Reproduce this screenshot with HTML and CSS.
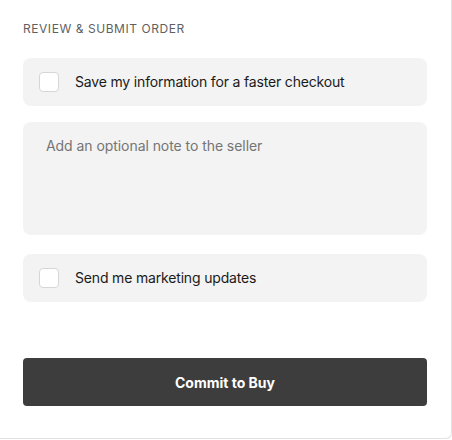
FILE: index.html
```html
<!DOCTYPE html>
<html lang="en">
<head>
<meta charset="utf-8">
<title>Review &amp; Submit Order</title>
<link rel="stylesheet" href="styles.css">
</head>
<body>
<section class="card">
  <h2 class="heading">REVIEW &amp; SUBMIT ORDER</h2>
  <label class="option">
    <span class="check"></span>
    <span class="option-text">Save my information for a faster checkout</span>
  </label>
  <div class="note">Add an optional note to the seller</div>
  <label class="option">
    <span class="check"></span>
    <span class="option-text">Send me marketing updates</span>
  </label>
  <button class="submit" type="button">Commit to Buy</button>
</section>
</body>
</html>
```
FILE: styles.css
```css
html, body {
  margin: 0;
  padding: 0;
  background: #ffffff;
}
body {
  font-family: Inter, "Noto Sans", "Liberation Sans", sans-serif;
  color: #1a1a1a;
}
.card {
  box-sizing: border-box;
  width: 452px;
  height: 439px;
  padding: 21px 24px 0 23px;
  border-right: 1px solid #e2e2e2;
  border-bottom: 1px solid #e2e2e2;
  border-bottom-right-radius: 6px;
  display: flex;
  flex-direction: column;
  background: #fff;
}
.heading {
  margin: 0;
  font-size: 12px;
  line-height: 16px;
  font-weight: 400;
  letter-spacing: 0.55px;
  color: #5f5f5f;
}
.option {
  display: flex;
  align-items: center;
  gap: 16px;
  height: 48px;
  padding: 0 16px;
  background: #f3f3f3;
  border-radius: 8px;
}
.heading + .option {
  margin-top: 21px;
}
.check {
  box-sizing: border-box;
  width: 20px;
  height: 20px;
  background: #fff;
  border: 1px solid #d6d6d6;
  border-radius: 4px;
  flex: none;
}
.option-text {
  font-size: 14px;
  line-height: 20px;
  letter-spacing: -0.17px;
  color: #1a1a1a;
}
.note {
  box-sizing: border-box;
  margin-top: 16px;
  height: 113px;
  padding: 14px 23px;
  background: #f3f3f3;
  border-radius: 8px;
  font-size: 14px;
  line-height: 20px;
  letter-spacing: -0.06px;
  color: #757575;
}
.note + .option {
  margin-top: 19px;
}
.submit {
  margin-top: 56px;
  height: 48px;
  border: 0;
  border-radius: 4px;
  background: #3d3d3d;
  color: #fff;
  font-family: inherit;
  font-size: 14px;
  font-weight: 700;
}
```
